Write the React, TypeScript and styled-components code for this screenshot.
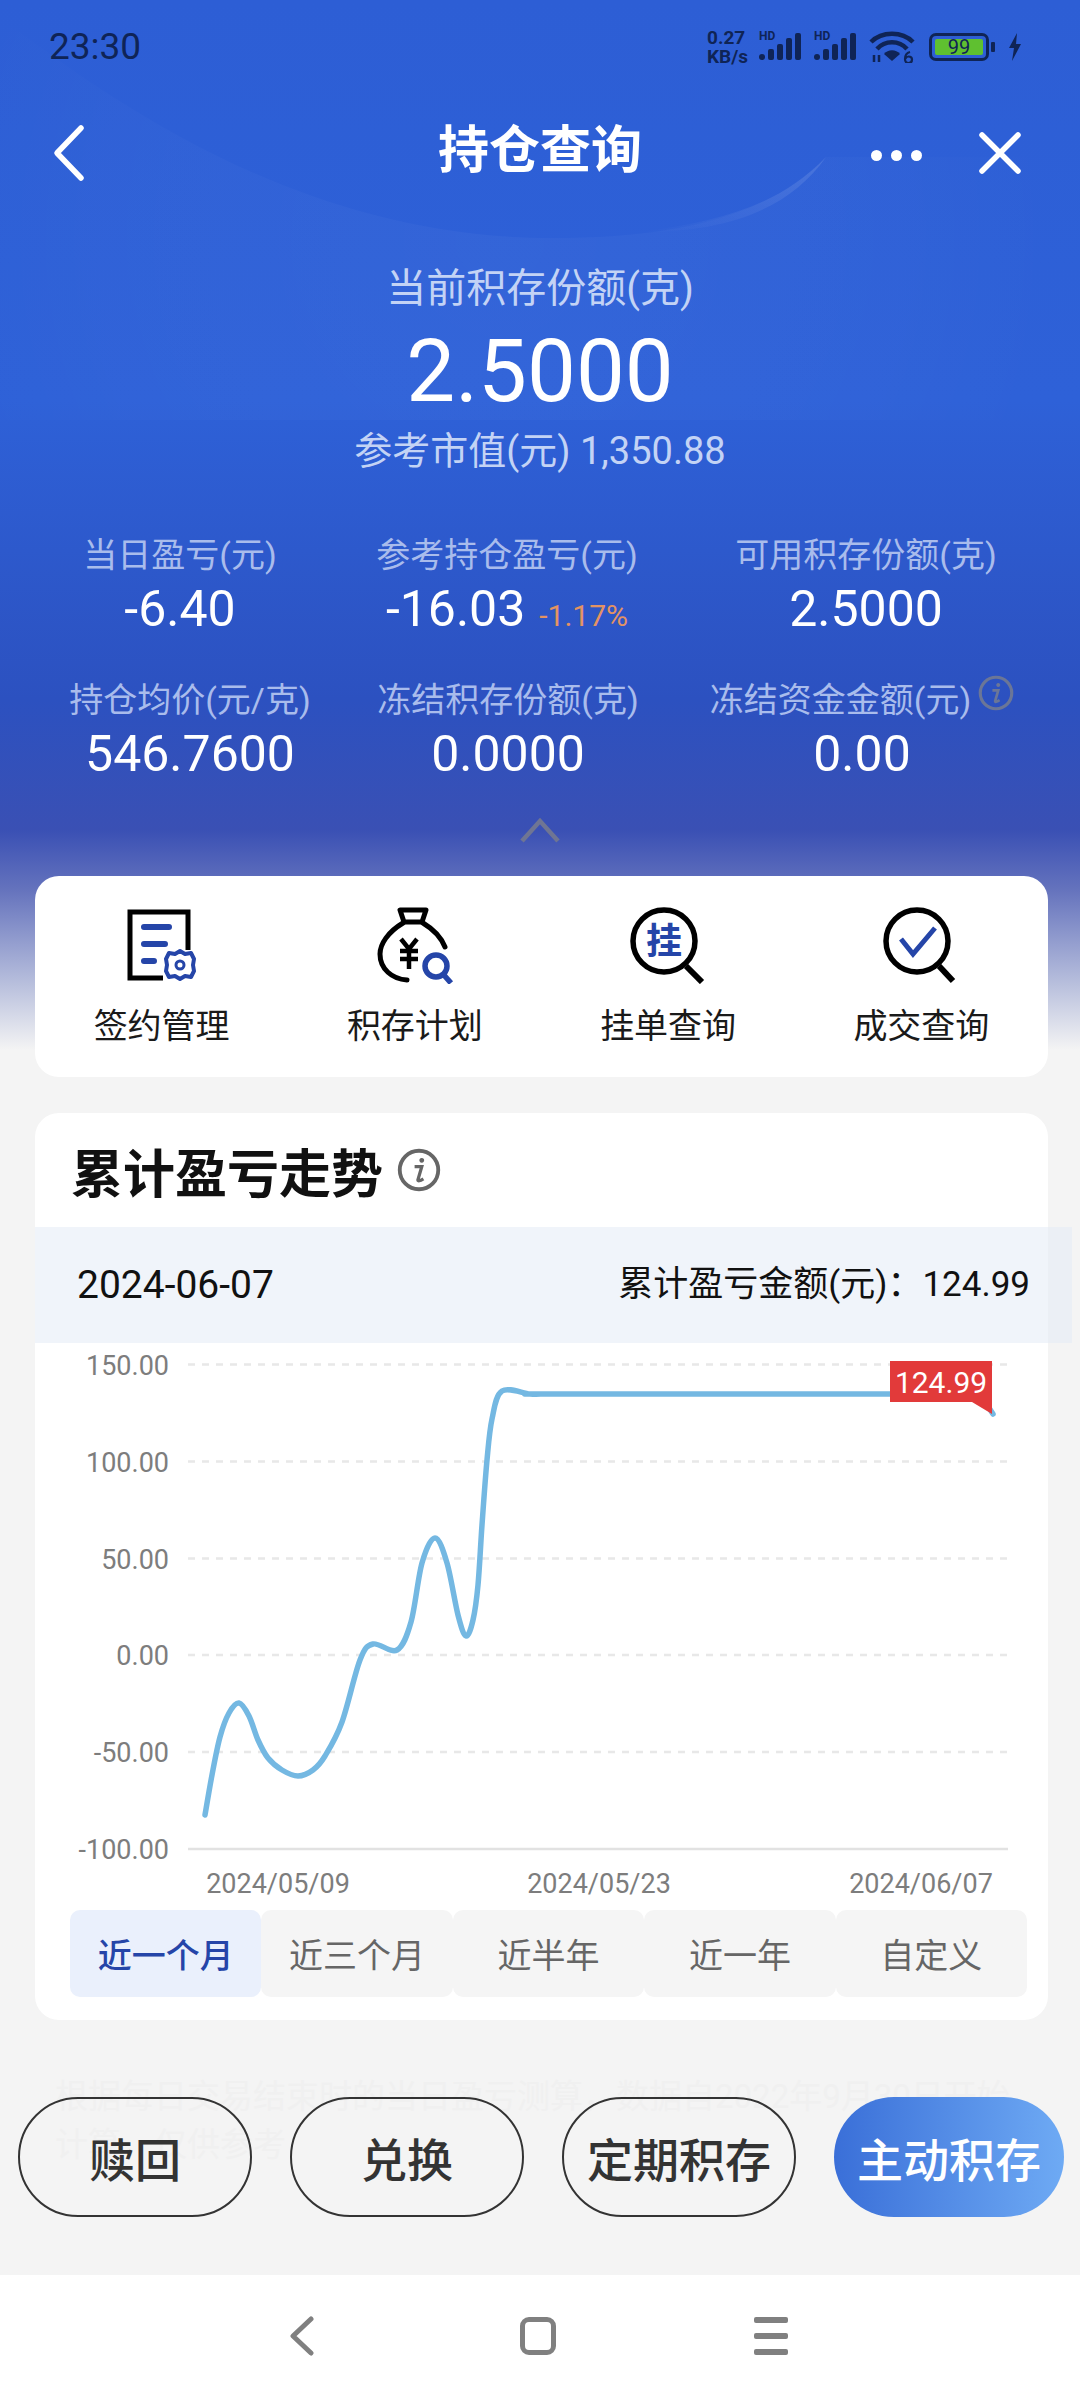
import React from "react";
import styled, { createGlobalStyle } from "styled-components";

const FONT = `"Roboto", "Noto Sans CJK SC", sans-serif`;
const STATUS_INK = "#0f2456";
const ICON_BLUE = "#2545a8";

const GlobalStyle = createGlobalStyle`
  html, body {
    margin: 0;
    padding: 0;
    background: #f4f4f4;
  }
  * {
    box-sizing: border-box;
  }
`;

const STAT_ROWS = [
  {
    columns: "330px 324px 394px",
    items: [
      { label: "当日盈亏(元)", value: "-6.40" },
      { label: "参考持仓盈亏(元)", value: "-16.03", extra: "-1.17%" },
      { label: "可用积存份额(克)", value: "2.5000" },
    ],
  },
  {
    columns: "350px 286px 422px",
    items: [
      { label: "持仓均价(元/克)", value: "546.7600" },
      { label: "冻结积存份额(克)", value: "0.0000" },
      { label: "冻结资金金额(元)", value: "0.00", info: true },
    ],
  },
];

const RANGES = ["近一个月", "近三个月", "近半年", "近一年", "自定义"];

const ACTIONS = ["赎回", "兑换", "定期积存"];

const GRID = [
  { y: 1364.5, label: "150.00" },
  { y: 1461.5, label: "100.00" },
  { y: 1558.5, label: "50.00" },
  { y: 1655, label: "0.00" },
  { y: 1752, label: "-50.00" },
  { y: 1849, label: "-100.00" },
];

// traced from the curve, joined below with a catmull-rom spline
const CURVE_POINTS: [number, number][] = [
  [205, 1815], [212, 1775], [220, 1737], [229, 1713], [239, 1703], [249, 1716], [258, 1740], [268, 1758],
  [282, 1770], [298, 1776], [313, 1770], [325, 1756], [342, 1722], [360, 1660], [373, 1644], [397, 1650],
  [411, 1622], [422, 1563], [435, 1538], [447, 1563], [458, 1615], [466, 1636], [473, 1620], [478, 1585],
  [482, 1525], [487, 1460], [492, 1419], [502, 1391], [530, 1394], [545, 1394], [560, 1394], [980, 1394],
];

function smoothPath(points: [number, number][]) {
  let d = `M${points[0][0]} ${points[0][1]}`;
  for (let i = 0; i < points.length - 1; i++) {
    const p0 = points[Math.max(i - 1, 0)];
    const p1 = points[i];
    const p2 = points[i + 1];
    const p3 = points[Math.min(i + 2, points.length - 1)];
    const c1x = p1[0] + (p2[0] - p0[0]) / 6;
    const c1y = p1[1] + (p2[1] - p0[1]) / 6;
    const c2x = p2[0] - (p3[0] - p1[0]) / 6;
    const c2y = p2[1] - (p3[1] - p1[1]) / 6;
    d += ` C${c1x} ${c1y} ${c2x} ${c2y} ${p2[0]} ${p2[1]}`;
  }
  return d + " L993 1414";
}

function DocIcon() {
  return (
    <svg width="72" height="74" viewBox="0 0 72 74" fill="none">
      <path d="M37 70 H4 V4 H62 V42" stroke="#000" strokeWidth="5" />
      <path d="M18 19 H43 M18 36 H39 M18 53 H28" stroke={ICON_BLUE} strokeWidth="6" strokeLinecap="round" />
      <path
        d="M54 43 L59 46 L65 45 L68 51 L67 57 L68 63 L65 69 L59 68 L54 71 L49 68 L43 69 L40 63 L41 57 L40 51 L43 45 L49 46 Z"
        stroke={ICON_BLUE}
        strokeWidth="4"
        strokeLinejoin="round"
      />
      <circle cx="54" cy="57" r="4" stroke={ICON_BLUE} strokeWidth="3" />
    </svg>
  );
}

function BagIcon() {
  return (
    <svg width="78" height="78" viewBox="0 0 78 78" fill="none">
      <path d="M24 4 H50 L46 16 H28 Z" stroke="#000" strokeWidth="5" strokeLinejoin="round" />
      <path d="M27 17 C12 26 4 38 4 48 C4 63 16 73 31 74" stroke="#000" strokeWidth="5" strokeLinecap="round" />
      <path d="M47 17 C57 23 65 31 69 41" stroke="#000" strokeWidth="5" strokeLinecap="round" />
      <path d="M25 33 L33 43 L41 33 M24 45 H42 M24 53 H42 M33 43 V63" stroke="#000" strokeWidth="4.5" />
      <circle cx="60" cy="60" r="11" stroke={ICON_BLUE} strokeWidth="5.5" />
      <path d="M67 68 L75 77" stroke={ICON_BLUE} strokeWidth="5.5" />
    </svg>
  );
}

function HangIcon() {
  return (
    <svg width="78" height="78" viewBox="0 0 78 78" fill="none">
      <circle cx="35" cy="35" r="31" stroke="#000" strokeWidth="5.5" />
      <path d="M57 60 L73 76" stroke="#000" strokeWidth="6" />
      <text x="35" y="48" textAnchor="middle" fontSize="36" fontWeight="700" fill={ICON_BLUE} fontFamily={FONT}>
        挂
      </text>
    </svg>
  );
}

function CheckIcon() {
  return (
    <svg width="78" height="78" viewBox="0 0 78 78" fill="none">
      <circle cx="35" cy="35" r="31" stroke="#000" strokeWidth="5.5" />
      <path d="M57 60 L71 75" stroke="#000" strokeWidth="6" />
      <path d="M19 33 L31 48 L53 22" stroke={ICON_BLUE} strokeWidth="5" />
    </svg>
  );
}

const SHORTCUTS = [
  { label: "签约管理", icon: <DocIcon /> },
  { label: "积存计划", icon: <BagIcon /> },
  { label: "挂单查询", icon: <HangIcon /> },
  { label: "成交查询", icon: <CheckIcon /> },
];

function InfoIcon({ size, color }: { size: number; color: string }) {
  return (
    <svg width={size} height={size} viewBox="0 0 40 40" fill="none">
      <circle cx="20" cy="20" r="17.5" stroke={color} strokeWidth="3.5" />
      <path d="M22.5 9 a2.2 2.2 0 1 0 0.01 0 Z" fill={color} />
      <path d="M16 17 H22.5 L19 29 Q19 31 24 28" stroke={color} strokeWidth="3" fill="none" />
    </svg>
  );
}

function Cellular() {
  return (
    <SignalWrap>
      <HdMark>HD</HdMark>
      <svg width="44" height="28" viewBox="0 0 44 28" fill={STATUS_INK}>
        <rect x="0" y="21" width="6" height="6" rx="3" />
        <rect x="9" y="16" width="6" height="11" rx="2" />
        <rect x="18" y="11" width="6" height="16" rx="2" />
        <rect x="27" y="5" width="6" height="22" rx="2" />
        <rect x="36" y="0" width="6" height="27" rx="2" />
      </svg>
    </SignalWrap>
  );
}

function Wifi() {
  return (
    <svg width="46" height="32" viewBox="0 0 46 32" fill="none" stroke={STATUS_INK} strokeWidth="4.5">
      <path d="M2 11 C13 0 33 0 44 11" />
      <path d="M8 18 C16 9 30 9 38 18" />
      <path d="M23 30 L15 23 C19 18 27 18 31 23 Z" fill={STATUS_INK} stroke="none" />
      <path d="M5 24 V31 M10 31 V24" strokeWidth="2.5" />
      <path d="M41 21 C37 22 36 25 36 28 C36 30.5 37.5 32 39.5 32 C41.5 32 43 30.5 43 28.5 C43 26.5 41.5 25.5 39.5 25.5 C38 25.5 37 26.5 36.5 27.5" strokeWidth="2.2" />
    </svg>
  );
}

export default function App() {
  return (
    <>
      <GlobalStyle />
      <Page>
        <Hero>
          <Curve viewBox="0 0 1080 420">
            <defs>
              <radialGradient id="curveFill" gradientUnits="userSpaceOnUse" cx="500" cy="240" r="560">
                <stop offset="0" stopColor="#fff" stopOpacity="0.03" />
                <stop offset="0.7" stopColor="#fff" stopOpacity="0.015" />
                <stop offset="1" stopColor="#fff" stopOpacity="0" />
              </radialGradient>
              <linearGradient id="curveEdge" x1="0" y1="1" x2="1" y2="0">
                <stop offset="0" stopColor="#fff" stopOpacity="0" />
                <stop offset="1" stopColor="#fff" stopOpacity="0.12" />
              </linearGradient>
            </defs>
            <path d="M0 17 C110 100 300 238 551 238 C680 238 770 215 826 157 L1080 157 L1080 420 L0 420 Z" fill="url(#curveFill)" />
            <path d="M640 232 C720 222 780 205 826 157 C790 208 730 232 640 232 Z" fill="url(#curveEdge)" />
          </Curve>
          <StatusBar>
            <Clock>23:30</Clock>
            <StatusIcons>
              <Speed>
                0.27
                <br />
                KB/s
              </Speed>
              <Cellular />
              <Cellular />
              <Wifi />
              <BatteryGroup>
                <Battery>
                  <BatteryFill>99</BatteryFill>
                </Battery>
                <BatteryCap />
              </BatteryGroup>
              <svg width="14" height="28" viewBox="0 0 14 28" fill={STATUS_INK}>
                <path d="M9 0 L1 15 H6 L4 28 L13 11 H8 Z" />
              </svg>
            </StatusIcons>
          </StatusBar>
          <NavBar>
            <NavButton aria-label="返回">
              <svg width="34" height="58" viewBox="0 0 34 58" fill="none" stroke="#fff" strokeWidth="5.5" strokeLinecap="round" strokeLinejoin="round">
                <path d="M29 4 L5 29 L29 54" />
              </svg>
            </NavButton>
            <NavTitle>持仓查询</NavTitle>
            <NavRight>
              <Dots>
                <Dot />
                <Dot />
                <Dot />
              </Dots>
              <svg width="44" height="44" viewBox="0 0 44 44" fill="none" stroke="#fff" strokeWidth="5.5" strokeLinecap="round">
                <path d="M4 4 L40 40 M40 4 L4 40" />
              </svg>
            </NavRight>
          </NavBar>
          <Summary>
            <SummaryLabel>当前积存份额(克)</SummaryLabel>
            <SummaryValue>2.5000</SummaryValue>
            <SummaryWorth>参考市值(元) 1,350.88</SummaryWorth>
          </Summary>
          <StatRows>
            {STAT_ROWS.map((row) => (
              <StatRow key={row.columns} $columns={row.columns}>
                {row.items.map((s) => (
                  <Stat key={s.label}>
                    <StatLabel>
                      {s.label}
                      {"info" in s && (
                        <InfoBadge>
                          <InfoIcon size={36} color="#6b7697" />
                        </InfoBadge>
                      )}
                    </StatLabel>
                    <StatValue>
                      {s.value}
                      {"extra" in s && <StatExtra>{s.extra}</StatExtra>}
                    </StatValue>
                  </Stat>
                ))}
              </StatRow>
            ))}
          </StatRows>
          <Collapse>
            <svg width="42" height="26" viewBox="0 0 42 26" fill="none" stroke="#6f7593" strokeWidth="4.5">
              <path d="M3 24 L21 4 L39 24" />
            </svg>
          </Collapse>
        </Hero>

        <Main>
          <ShortcutCard>
            {SHORTCUTS.map((s) => (
              <Shortcut key={s.label}>
                <ShortcutIcon>{s.icon}</ShortcutIcon>
                <ShortcutLabel>{s.label}</ShortcutLabel>
              </Shortcut>
            ))}
          </ShortcutCard>

          <ChartCard>
            <ChartTitle>
              累计盈亏走势
              <InfoIcon size={44} color="#666" />
            </ChartTitle>
            <InfoBand>
              <BandDate>2024-06-07</BandDate>
              <BandAmount>累计盈亏金额(元)：124.99</BandAmount>
            </InfoBand>
            <ChartSvg viewBox="35 1343 1013 567">
              {GRID.map((g, i) => (
                <g key={g.y}>
                  <line
                    x1="188"
                    x2="1008"
                    y1={g.y}
                    y2={g.y}
                    stroke={i === GRID.length - 1 ? "#e2e2e2" : "#e8e8e8"}
                    strokeWidth="2.5"
                    strokeDasharray={i === GRID.length - 1 ? undefined : "7 7"}
                  />
                  <text x="169" y={g.y + 10} textAnchor="end" fontSize="27" fill="#7d7d7d" fontFamily={FONT}>
                    {g.label}
                  </text>
                </g>
              ))}
              <path d={smoothPath(CURVE_POINTS)} fill="none" stroke="#74b8e2" strokeWidth="5.5" strokeLinecap="round" />
              <path d="M890 1361 H992 V1414 L972 1402 H890 Z" fill="#e23a3a" />
              <text x="941" y="1393" textAnchor="middle" fontSize="30" fill="#fff" fontFamily={FONT}>
                124.99
              </text>
              <text x="278" y="1893" textAnchor="middle" fontSize="27" fill="#7d7d7d" fontFamily={FONT}>
                2024/05/09
              </text>
              <text x="599" y="1893" textAnchor="middle" fontSize="27" fill="#7d7d7d" fontFamily={FONT}>
                2024/05/23
              </text>
              <text x="921" y="1893" textAnchor="middle" fontSize="27" fill="#7d7d7d" fontFamily={FONT}>
                2024/06/07
              </text>
            </ChartSvg>
            <Tabs>
              {RANGES.map((r, i) => (
                <Tab key={r} $active={i === 0}>
                  {r}
                </Tab>
              ))}
            </Tabs>
          </ChartCard>

          <Footer>
            <Note>
              根据每日交易结束时的当日盈亏测算，数据自2022年9月30日开始
              <br />
              计算，仅供参考
            </Note>
            <Actions>
              {ACTIONS.map((a) => (
                <ActionButton key={a}>{a}</ActionButton>
              ))}
              <PrimaryButton>主动积存</PrimaryButton>
            </Actions>
          </Footer>
        </Main>

        <SystemBar>
          <svg width="26" height="40" viewBox="0 0 26 40" fill="none" stroke="#808080" strokeWidth="5" strokeLinecap="round" strokeLinejoin="round">
            <path d="M22 3 L4 20 L22 37" />
          </svg>
          <HomeKey />
          <MenuKey>
            <MenuLine />
            <MenuLine />
            <MenuLine />
          </MenuKey>
        </SystemBar>
      </Page>
    </>
  );
}

const Page = styled.div`
  width: 1080px;
  height: 2400px;
  overflow: hidden;
  display: flex;
  flex-direction: column;
  font-family: ${FONT};
  background: linear-gradient(
    180deg,
    #2d5ed5 0,
    #2e61d8 400px,
    #2c51c0 700px,
    #3a50b4 830px,
    #6573bd 890px,
    #b9c0dd 985px,
    #f4f4f4 1050px
  );
`;

const Hero = styled.section`
  position: relative;
  height: 876px;
  flex: none;
`;

const Curve = styled.svg`
  position: absolute;
  top: 0;
  left: 0;
  width: 1080px;
  height: 420px;
`;

const StatusBar = styled.div`
  position: relative;
  height: 94px;
  padding: 0 58px 1px 49px;
  display: flex;
  justify-content: space-between;
  align-items: center;
`;

const Clock = styled.span`
  font-size: 37px;
  color: ${STATUS_INK};
`;

const StatusIcons = styled.div`
  display: flex;
  align-items: center;
  gap: 11px;
`;

const Speed = styled.span`
  font-size: 19px;
  line-height: 19px;
  font-weight: 700;
  color: ${STATUS_INK};
`;

const SignalWrap = styled.span`
  position: relative;
  display: inline-flex;
`;

const HdMark = styled.span`
  position: absolute;
  top: -4px;
  left: 0;
  font-size: 12px;
  line-height: 14px;
  font-weight: 700;
  color: ${STATUS_INK};
`;

const BatteryGroup = styled.span`
  display: inline-flex;
  align-items: center;
  margin: 0 2px 0 3px;
  gap: 2px;
`;

const Battery = styled.span`
  width: 60px;
  height: 28px;
  padding: 3px;
  border: 3px solid ${STATUS_INK};
  border-radius: 7px;
  display: flex;
`;

const BatteryFill = styled.span`
  flex: 1;
  background: #5fc030;
  border-radius: 2px;
  color: ${STATUS_INK};
  font-size: 20px;
  line-height: 16px;
  text-align: center;
`;

const BatteryCap = styled.span`
  width: 4px;
  height: 10px;
  background: ${STATUS_INK};
  border-radius: 1px;
`;

const NavBar = styled.div`
  position: relative;
  height: 118px;
  padding: 0 58px 0 52px;
  display: flex;
  align-items: center;
  justify-content: space-between;
`;

const NavButton = styled.div`
  display: flex;
`;

const NavTitle = styled.h1`
  position: absolute;
  left: 0;
  right: 0;
  margin: 0 0 4px;
  text-align: center;
  font-size: 51px;
  line-height: 70px;
  font-weight: 700;
  color: #fff;
`;

const NavRight = styled.div`
  display: flex;
  align-items: center;
  gap: 56px;
`;

const Dots = styled.div`
  display: flex;
  gap: 9px;
  margin-top: 4px;
`;

const Dot = styled.span`
  width: 11px;
  height: 11px;
  border-radius: 50%;
  background: #fff;
`;

const Summary = styled.div`
  position: relative;
  margin-top: 50px;
  display: flex;
  flex-direction: column;
  align-items: center;
`;

const SummaryLabel = styled.div`
  font-size: 40px;
  line-height: 54px;
  color: #c3d3f5;
`;

const SummaryValue = styled.div`
  margin-top: 1px;
  font-size: 87px;
  line-height: 108px;
  color: #fff;
`;

const SummaryWorth = styled.div`
  font-size: 38px;
  line-height: 52px;
  color: #c3d3f5;
`;

const StatRows = styled.div`
  position: relative;
  margin-top: 53px;
  padding-left: 15px;
  display: flex;
  flex-direction: column;
  gap: 30px;
`;

const StatRow = styled.div<{ $columns: string }>`
  display: grid;
  grid-template-columns: ${(p) => p.$columns};
`;

const Stat = styled.div`
  display: flex;
  flex-direction: column;
  align-items: center;
`;

const StatLabel = styled.div`
  display: flex;
  align-items: flex-start;
  gap: 7px;
  font-size: 34px;
  line-height: 50px;
  white-space: nowrap;
  color: #a9bcec;
`;

const InfoBadge = styled.span`
  display: flex;
  height: 36px;
`;

const StatValue = styled.div`
  font-size: 50px;
  line-height: 58px;
  color: #fff;
`;

const StatExtra = styled.span`
  margin-left: 14px;
  font-size: 30px;
  color: #e39363;
`;

const Collapse = styled.div`
  position: relative;
  margin-top: 34px;
  display: flex;
  justify-content: center;
`;

const Main = styled.main`
  flex: 1;
  padding: 0 32px 0 35px;
  display: flex;
  flex-direction: column;
`;

const ShortcutCard = styled.div`
  height: 201px;
  border-radius: 24px;
  background: #fff;
  display: grid;
  grid-template-columns: repeat(4, 1fr);
`;

const Shortcut = styled.div`
  padding-top: 30px;
  display: flex;
  flex-direction: column;
  align-items: center;
`;

const ShortcutIcon = styled.div`
  height: 78px;
  display: flex;
  align-items: center;
`;

const ShortcutLabel = styled.div`
  margin-top: 18px;
  font-size: 34px;
  line-height: 48px;
  color: #1a1a1a;
`;

const ChartCard = styled.div`
  position: relative;
  margin-top: 36px;
  height: 907px;
  flex: none;
  border-radius: 24px;
  background: #fff;
`;

const ChartTitle = styled.h2`
  height: 114px;
  margin: 0;
  padding: 0 0 0 36px;
  display: flex;
  align-items: center;
  gap: 14px;
  font-size: 52px;
  font-weight: 700;
  color: #111;
`;

const InfoBand = styled.div`
  width: 1037px;
  height: 116px;
  padding: 0 42px;
  display: flex;
  align-items: center;
  justify-content: space-between;
  color: #111;
  background: rgba(226, 234, 245, 0.5);
`;

const BandDate = styled.span`
  font-size: 39px;
  line-height: 44px;
`;

const BandAmount = styled.span`
  font-size: 35px;
  line-height: 44px;
`;

const ChartSvg = styled.svg`
  display: block;
  width: 1013px;
  height: 567px;
`;

const Tabs = styled.div`
  margin: 0 21px 0 35px;
  height: 87px;
  display: grid;
  grid-template-columns: repeat(5, 1fr);
`;

const Tab = styled.div<{ $active: boolean }>`
  display: flex;
  align-items: center;
  justify-content: center;
  border-radius: 10px;
  font-size: 34px;
  font-weight: ${(p) => (p.$active ? 500 : 400)};
  color: ${(p) => (p.$active ? ICON_BLUE : "#666")};
  background: ${(p) => (p.$active ? "#eaf0fc" : "#f5f5f5")};
`;

const Footer = styled.div`
  position: relative;
  margin: 53px -14px 0 -17px;
`;

const Note = styled.div`
  padding-left: 37px;
  font-size: 33px;
  line-height: 48px;
  white-space: nowrap;
  color: #f0f0f0;
`;

const Actions = styled.div`
  position: absolute;
  top: 24px;
  left: 0;
  right: 0;
  display: grid;
  grid-template-columns: repeat(3, 234px) 230px;
  column-gap: 38px;
  align-items: center;
`;

const ActionButton = styled.div`
  height: 120px;
  border: 2px solid #333;
  border-radius: 60px;
  display: flex;
  align-items: center;
  justify-content: center;
  font-size: 46px;
  font-weight: 500;
  color: #333;
`;

const PrimaryButton = styled(ActionButton)`
  border: none;
  color: #fff;
  background: linear-gradient(90deg, #3a6fd8, #6eaaf4);
`;

const SystemBar = styled.div`
  height: 125px;
  flex: none;
  padding: 0 4px 4px 0;
  background: #fff;
  display: flex;
  align-items: center;
  justify-content: center;

  & > svg {
    margin-right: 205px;
  }
`;

const HomeKey = styled.span`
  width: 36px;
  height: 38px;
  margin-right: 198px;
  border: 5px solid #808080;
  border-radius: 9px;
`;

const MenuKey = styled.div`
  width: 34px;
  display: flex;
  flex-direction: column;
  gap: 10px;
`;

const MenuLine = styled.span`
  height: 6px;
  border-radius: 2px;
  background: #808080;
`;
